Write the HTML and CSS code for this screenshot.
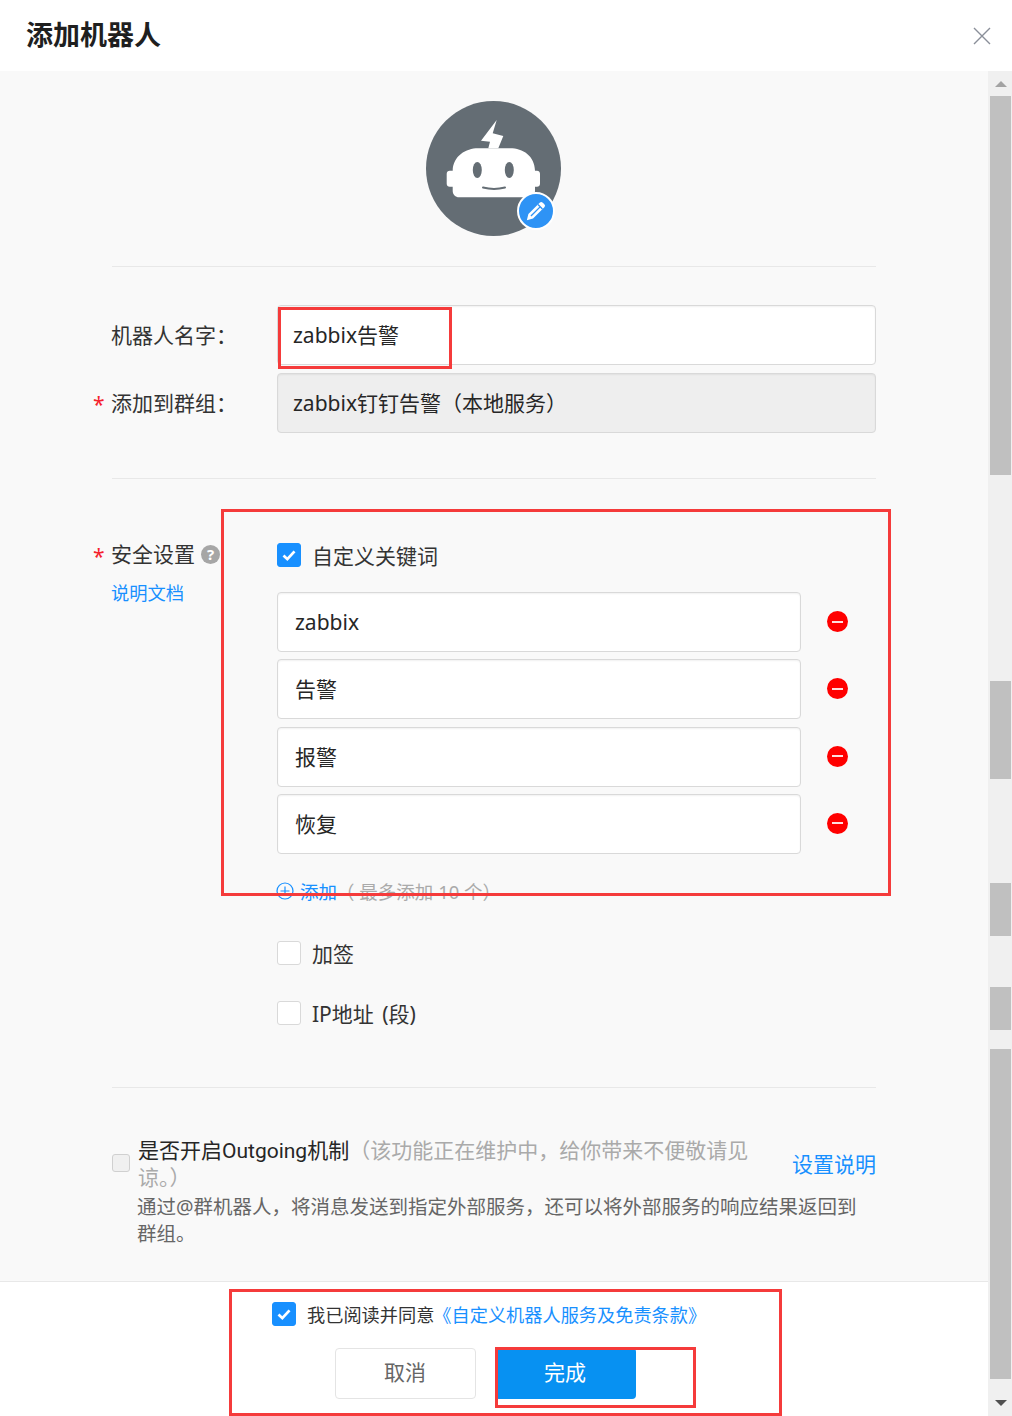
FILE: index.html
```html
<!DOCTYPE html>
<html lang="zh-CN">
<head>
<meta charset="UTF-8" />
<meta name="viewport" content="width=device-width, initial-scale=1" />
<title>添加机器人</title>
<link rel="stylesheet" href="styles.css">
</head>
<body>
  <div class="dialog">
    <header class="dialog-head">
      <h1>添加机器人</h1>
      <svg class="close" viewBox="0 0 18 18" aria-label="关闭"><path d="M1 1l16 16M17 1L1 17" /></svg>
    </header>

    <div class="dialog-left">
      <main class="content">
        <div class="avatar-wrap">
          <div class="avatar">
            <svg viewBox="0 0 135 135">
              <circle cx="67.5" cy="67.5" r="67.5" fill="#646d74" />
              <path fill="#fff" d="M70.7 19L55 39.7l9 1-1.7 6.6h10l5-12.3-10.6-2.7z" />
              <path fill="#fff" d="M26.7 69.7C27 55 40 47.3 52 47.3h32c13 0 24.7 7.7 25 22.4h2c1.7 0 3 1.3 3 3v10c0 1.7-1.3 3-3 3h-2V90c0 3.5-2.8 6.3-6.3 6.3H33c-3.5 0-6.3-2.8-6.3-6.3v-4.3h-3c-1.7 0-3-1.3-3-3v-10c0-1.7 1.3-3 3-3z" />
              <ellipse cx="51.3" cy="69" rx="4.5" ry="8" fill="#646d74" />
              <ellipse cx="83.3" cy="69" rx="4.5" ry="8" fill="#646d74" />
              <path d="M57 86.5q11 2.8 22 0" fill="none" stroke="#646d74" stroke-width="2" stroke-linecap="round" />
            </svg>
            <span class="avatar-edit">
              <svg viewBox="0 0 24 24">
                <path fill="#fff" d="M2 22l1.7-6.8L16 2.9a2.4 2.4 0 0 1 3.4 0l1.7 1.7a2.4 2.4 0 0 1 0 3.4L8.8 20.3z" />
                <path fill="none" stroke="#2e93f5" stroke-width="1.5" d="M6.5 17.5L16.5 7.5M14.2 5l4.8 4.8" />
              </svg>
            </span>
          </div>
        </div>

        <hr class="line" />

        <div class="form-row row-name">
          <label class="form-label">机器人名字：</label>
          <div class="text-input">zabbix告警</div>
        </div>
        <div class="form-row row-group">
          <label class="form-label required">添加到群组：</label>
          <div class="text-input is-disabled">zabbix钉钉告警（本地服务）</div>
        </div>

        <hr class="line line-2" />

        <div class="form-row row-security">
          <div class="form-label required">
            <div class="security-title">安全设置 <span class="help">?</span></div>
            <a class="doc-link">说明文档</a>
          </div>
          <div class="security-body">
            <div class="check-row">
              <span class="checkbox is-checked"><svg viewBox="0 0 24 24"><path d="M6 12.5l4.2 4L18 8" /></svg></span>
              <span>自定义关键词</span>
            </div>
            <div class="keywords">
              <div class="keyword"><div class="text-input">zabbix</div><span class="minus"></span></div>
              <div class="keyword"><div class="text-input">告警</div><span class="minus"></span></div>
              <div class="keyword"><div class="text-input">报警</div><span class="minus"></span></div>
              <div class="keyword"><div class="text-input">恢复</div><span class="minus"></span></div>
            </div>
            <div class="add-row">
              <svg class="plus" viewBox="0 0 18 18"><circle cx="9" cy="9" r="8" /><path d="M9 4.5v9M4.5 9h9" /></svg>
              <a class="add-link">添加</a>
              <span class="add-hint">（ 最多添加 10 个）</span>
            </div>
            <div class="check-row row-sign">
              <span class="checkbox"></span>
              <span>加签</span>
            </div>
            <div class="check-row row-ip">
              <span class="checkbox"></span>
              <span class="ip-label">IP地址 (段)</span>
            </div>
          </div>
        </div>

        <hr class="line line-3" />

        <div class="outgoing">
          <span class="checkbox-small"></span>
          <div class="outgoing-title">是否开启Outgoing机制<span class="muted">（该功能正在维护中，给你带来不便敬请见谅。）</span></div>
          <a class="setup-link">设置说明</a>
        </div>
        <p class="outgoing-desc">通过@群机器人，将消息发送到指定外部服务，还可以将外部服务的响应结果返回到群组。</p>
      </main>

      <footer class="dialog-foot">
        <div class="agree">
          <span class="checkbox is-checked"><svg viewBox="0 0 24 24"><path d="M6 12.5l4.2 4L18 8" /></svg></span>
          <span>我已阅读并同意</span>
          <a class="terms">《自定义机器人服务及免责条款》</a>
        </div>
        <div class="actions">
          <button type="button" class="btn-cancel">取消</button>
          <button type="button" class="btn-done">完成</button>
        </div>
      </footer>
    </div>

    <aside class="scrollbar">
      <span class="arrow-up"></span>
      <span class="thumb thumb-a"></span>
      <span class="thumb thumb-b"></span>
      <span class="thumb thumb-c"></span>
      <span class="thumb thumb-d"></span>
      <span class="thumb thumb-e"></span>
      <span class="arrow-down"></span>
    </aside>

    <!-- red marks drawn on top of the screenshot -->
    <div class="mark mark-name"></div>
    <div class="mark mark-security"></div>
    <div class="mark mark-foot"></div>
    <div class="mark mark-done"></div>
  </div>
</body>
</html>
```

FILE: styles.css
```css
* {
  box-sizing: border-box;
}
body {
  margin: 0;
  font-family: "Noto Sans", "Noto Sans CJK SC", sans-serif;
  color: #262626;
  background: #fff;
}
a {
  color: #1890ff;
}
.dialog {
  position: relative;
  display: grid;
  grid-template-columns: 988px 24px;
  grid-template-rows: 71px 1345px;
  height: 1416px;
  overflow: hidden;
}
.dialog-head {
  grid-column: 1 / 3;
  display: flex;
  align-items: center;
  justify-content: space-between;
  padding: 0 21px 4px 26px;
  background: #fff;
}
.dialog-head h1 {
  margin: 0;
  font-size: 27px;
  font-weight: 700;
  color: #1f1f1f;
}
.close {
  width: 18px;
  height: 18px;
  margin-top: 5px;
  fill: none;
  stroke: #8a8f99;
  stroke-width: 1.4;
}
.dialog-left {
  display: flex;
  flex-direction: column;
  min-height: 0;
}
.content {
  flex: 1;
  padding: 30px 112px 0;
  background: #f9f9f9;
  font-size: 21px;
}
.avatar-wrap {
  display: flex;
  justify-content: center;
  padding-right: 1px;
}
.avatar {
  position: relative;
  width: 135px;
  height: 135px;
}
.avatar svg {
  display: block;
}
.avatar-edit {
  position: absolute;
  right: 6px;
  bottom: 6px;
  width: 38px;
  height: 38px;
  padding: 6px;
  border: 2px solid #fff;
  border-radius: 50%;
  background: #2e93f5;
}
.line {
  height: 1px;
  margin: 30px 0 38px;
  border: 0;
  background: #e8e8e8;
}
.line-2 {
  margin: 45px 0 0;
}
.line-3 {
  margin: 59px 0 50px;
}
.form-row {
  display: grid;
  grid-template-columns: 165px 1fr;
}
.row-name,
.row-group {
  align-items: center;
}
.row-group {
  margin-top: 8px;
}
.row-security {
  margin-top: 61px;
}
.form-label {
  position: relative;
  margin-left: -1px;
  color: #333;
  line-height: 30px;
}
.required::before {
  content: "*";
  position: absolute;
  left: -18px;
  top: 1px;
  color: #f5222d;
  font-size: 21px;
}
.text-input {
  height: 60px;
  padding: 0 15px;
  line-height: 58px;
  border: 1px solid #d9d9d9;
  border-radius: 4px;
  background: #fff;
  color: #262626;
  box-shadow: inset 0 1px 2px rgba(0, 0, 0, 0.06);
}
.is-disabled {
  background: #eee;
}
.security-title {
  display: flex;
  align-items: center;
  gap: 5px;
  margin-top: -1px;
  white-space: nowrap;
}
.help {
  width: 19px;
  height: 19px;
  margin-left: 1px;
  border-radius: 50%;
  background: #a6a6a6;
  color: #fff;
  font-size: 15px;
  font-weight: 700;
  line-height: 19px;
  text-align: center;
}
.doc-link {
  display: block;
  margin-top: 12px;
  font-size: 18.3px;
  line-height: 24px;
}
.check-row {
  display: flex;
  align-items: center;
  gap: 11px;
  height: 30px;
  color: #333;
}
.ip-label {
  word-spacing: 3px;
}
.checkbox {
  flex: none;
  width: 24px;
  height: 24px;
  border: 1px solid #d9d9d9;
  border-radius: 3px;
  background: #fff;
}
.is-checked {
  border-color: #1890ff;
  background: #1890ff;
}
.is-checked svg {
  display: block;
  width: 22px;
  height: 22px;
  fill: none;
  stroke: #fff;
  stroke-width: 3;
}
.keywords {
  display: flex;
  flex-direction: column;
  gap: 7.33px;
  margin-top: 22px;
}
.keyword {
  display: flex;
  align-items: center;
}
.keyword .text-input {
  width: 524px;
  padding-left: 17px;
}
.minus {
  position: relative;
  width: 21px;
  height: 21px;
  margin-top: -1px;
  margin-left: 26px;
  border-radius: 50%;
  background: #f00;
}
.minus::after {
  content: "";
  position: absolute;
  left: 5px;
  right: 5px;
  top: 9.5px;
  height: 2px;
  background: #fde0e0;
}
.add-row {
  display: flex;
  align-items: center;
  height: 26px;
  margin-top: 24px;
  font-size: 18.5px;
}
.plus {
  width: 18px;
  height: 18px;
  margin-right: 6px;
  margin-left: -1px;
  fill: none;
  stroke: #1890ff;
  stroke-width: 1.2;
}
.add-hint {
  margin-left: -1px;
  color: #aaa;
}
.row-sign {
  margin-top: 34px;
}
.row-ip {
  margin-top: 30px;
}
.outgoing {
  display: flex;
  align-items: center;
  line-height: 27px;
}
.checkbox-small {
  flex: none;
  width: 18px;
  height: 18px;
  margin-right: 8px;
  margin-bottom: 4px;
  border: 1px solid #d0d0d0;
  border-radius: 3px;
  background: #f0f0f0;
}
.outgoing-title {
  width: 630px;
  font-family: Roboto, "Noto Sans CJK SC", sans-serif;
}
.muted {
  color: #aaa;
}
.setup-link {
  margin-left: auto;
  white-space: nowrap;
}
.outgoing-desc {
  margin: 1px 0 0;
  padding-left: 25px;
  color: #666;
  font-size: 19.5px;
  line-height: 27px;
}
.dialog-foot {
  flex: none;
  height: 135px;
  padding-top: 20px;
  border-top: 1px solid #e8e8e8;
  background: #fff;
}
.agree {
  display: flex;
  align-items: center;
  gap: 11px;
  padding-left: 272px;
  font-size: 18.2px;
  color: #333;
  height: 24px;
}
.terms {
  margin-left: -12px;
}
.actions {
  display: flex;
  justify-content: center;
  gap: 19px;
  margin-top: 22px;
  padding-right: 18px;
}
.actions button {
  width: 141px;
  height: 51px;
  padding: 0 0 5px;
  border-radius: 4px;
  font: inherit;
  font-size: 21px;
}
.btn-cancel {
  border: 1px solid #e4e4e4;
  background: #fff;
  color: #666;
}
.btn-done {
  border: 0;
  background: #0791f2;
  color: #fff;
}
.scrollbar {
  display: flex;
  flex-direction: column;
  padding: 0 1px 0 2px;
  background: #f0f0f0;
}
.arrow-up,
.arrow-down {
  flex: none;
  width: 0;
  height: 0;
  align-self: center;
  border-left: 6px solid transparent;
  border-right: 6px solid transparent;
}
.arrow-up {
  margin-top: 10px;
  margin-bottom: 9px;
  border-bottom: 6px solid #a3a3a3;
}
.arrow-down {
  margin-top: 21px;
  border-top: 6px solid #505050;
}
.thumb {
  flex: none;
  display: block;
  background: #c0c0c0;
}
.thumb-a {
  height: 379px;
}
.thumb-b {
  height: 98px;
  margin-top: 206px;
}
.thumb-c {
  height: 53px;
  margin-top: 104px;
}
.thumb-d {
  height: 43px;
  margin-top: 51px;
}
.thumb-e {
  height: 330px;
  margin-top: 19px;
}
.mark {
  position: absolute;
  border: 3px solid #f53b3b;
}
.mark-name {
  left: 278px;
  top: 307px;
  width: 174px;
  height: 62px;
}
.mark-security {
  left: 221px;
  top: 509px;
  width: 670px;
  height: 387px;
}
.mark-foot {
  left: 229px;
  top: 1289px;
  width: 553px;
  height: 127px;
}
.mark-done {
  left: 495px;
  top: 1347px;
  width: 201px;
  height: 61px;
}
```
